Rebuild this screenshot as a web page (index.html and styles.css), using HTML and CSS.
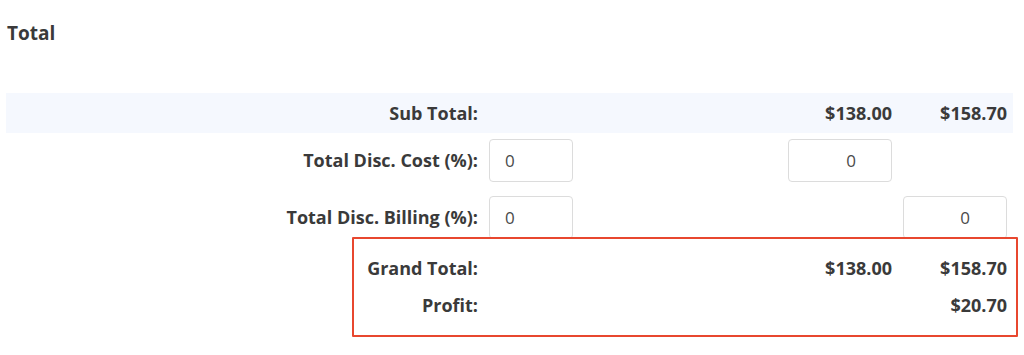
FILE: index.html
```html
<!DOCTYPE html>
<html lang="en">
<head>
  <meta charset="UTF-8">
  <meta name="viewport" content="width=device-width, initial-scale=1.0">
  <title>Total</title>
  <link rel="stylesheet" href="styles.css">
</head>
<body>
  <div class="total-container">
    <h3 class="total-title">Total</h3>

    <!-- Totals table -->
    <div class="totals">
      <div class="row sub-total">
        <div class="label">Sub Total:</div>
        <div></div>
        <div></div>
        <div class="value">$138.00</div>
        <div class="value">$158.70</div>
      </div>

      <div class="row input-row">
        <div class="label">Total Disc. Cost (%):</div>
        <input class="field field-left" type="text" value="0">
        <div></div>
        <input class="field field-right field-cost" type="text" value="0">
        <div></div>
      </div>

      <div class="row input-row">
        <div class="label">Total Disc. Billing (%):</div>
        <input class="field field-left" type="text" value="0">
        <div></div>
        <div></div>
        <input class="field field-right" type="text" value="0">
      </div>

      <!-- Highlighted summary -->
      <div class="highlight">
        <div class="row grand-row">
          <div class="label">Grand Total:</div>
          <div></div>
          <div></div>
          <div class="value">$138.00</div>
          <div class="value">$158.70</div>
        </div>
        <div class="row profit-row">
          <div class="label">Profit:</div>
          <div></div>
          <div></div>
          <div></div>
          <div class="value">$20.70</div>
        </div>
      </div>
    </div>
  </div>
</body>
</html>
```

FILE: styles.css
```css
body {
  margin: 0;
  font-family: "Open Sans", "Lato", sans-serif;
  color: #3a3a3a;
  background-color: #fff;
}
.total-container {
  padding: 0 11px 30px 6px;
}
.total-title {
  margin: 0;
  padding: 20px 0 0 1px;
  height: 93px;
  box-sizing: border-box;
  font-size: 19px;
  font-weight: 700;
  line-height: 26px;
}
.row {
  display: grid;
  grid-template-columns: 472px 84px 1fr 104px 104px;
  column-gap: 11px;
  align-items: center;
  padding-right: 6px;
  font-size: 18px;
  font-weight: 700;
}
.label,
.value {
  text-align: right;
}
.sub-total {
  height: 40px;
  background-color: #f5f8fe;
}
.input-row {
  height: 57px;
  align-items: start;
}
.input-row .label {
  line-height: 43px;
  padding-top: 6px;
}
.field {
  margin-top: 6px;
  height: 43px;
  width: 100%;
  box-sizing: border-box;
  border: 1px solid #dcdcdc;
  border-radius: 4px;
  font-family: inherit;
  font-size: 17px;
  color: #4a4a4a;
  background: #fff;
}
.field-left {
  text-align: left;
  padding-left: 15px;
}
.field-right {
  text-align: right;
  padding-right: 36px;
}
.field-cost {
  padding-right: 35px;
}
.highlight {
  position: relative;
  padding-top: 2px;
}
.highlight::before {
  content: "";
  position: absolute;
  left: 346px;
  right: -5px;
  top: -10px;
  height: 100px;
  box-sizing: border-box;
  border: 2px solid #e8472f;
  border-radius: 1px;
  pointer-events: none;
}
.grand-row,
.profit-row {
  height: 37px;
}
```
